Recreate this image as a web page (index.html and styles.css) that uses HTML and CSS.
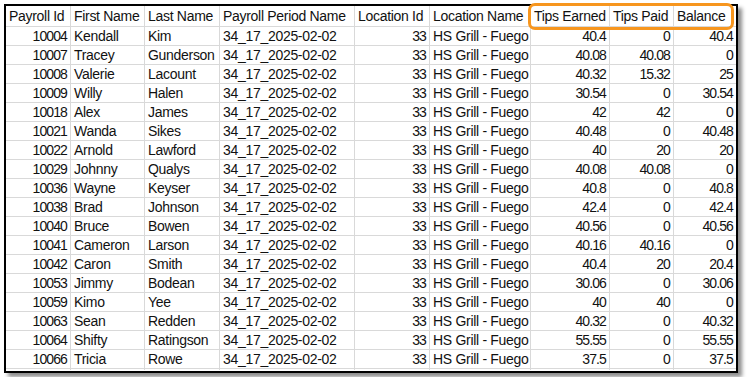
FILE: index.html
```html
<!DOCTYPE html>
<html>
<head>
<meta charset="utf-8">
<link rel="stylesheet" href="styles.css">
</head>
<body>
<div class="page">
  <div class="sheet">
    <table class="grid">
      <colgroup>
        <col class="c1"><col class="c2"><col class="c3"><col class="c4"><col class="c5"><col class="c6"><col class="c7"><col class="c8"><col class="c9">
      </colgroup>
      <thead>
        <tr>
          <th>Payroll Id</th><th>First Name</th><th>Last Name</th><th>Payroll Period Name</th><th>Location Id</th><th>Location Name</th><th>Tips Earned</th><th>Tips Paid</th><th>Balance</th>
        </tr>
      </thead>
      <tbody>
        <tr><td class="n">10004</td><td>Kendall</td><td>Kim</td><td>34_17_2025-02-02</td><td class="n">33</td><td>HS Grill - Fuego</td><td class="n">40.4</td><td class="n">0</td><td class="n">40.4</td></tr>
        <tr><td class="n">10007</td><td>Tracey</td><td>Gunderson</td><td>34_17_2025-02-02</td><td class="n">33</td><td>HS Grill - Fuego</td><td class="n">40.08</td><td class="n">40.08</td><td class="n">0</td></tr>
        <tr><td class="n">10008</td><td>Valerie</td><td>Lacount</td><td>34_17_2025-02-02</td><td class="n">33</td><td>HS Grill - Fuego</td><td class="n">40.32</td><td class="n">15.32</td><td class="n">25</td></tr>
        <tr><td class="n">10009</td><td>Willy</td><td>Halen</td><td>34_17_2025-02-02</td><td class="n">33</td><td>HS Grill - Fuego</td><td class="n">30.54</td><td class="n">0</td><td class="n">30.54</td></tr>
        <tr><td class="n">10018</td><td>Alex</td><td>James</td><td>34_17_2025-02-02</td><td class="n">33</td><td>HS Grill - Fuego</td><td class="n">42</td><td class="n">42</td><td class="n">0</td></tr>
        <tr><td class="n">10021</td><td>Wanda</td><td>Sikes</td><td>34_17_2025-02-02</td><td class="n">33</td><td>HS Grill - Fuego</td><td class="n">40.48</td><td class="n">0</td><td class="n">40.48</td></tr>
        <tr><td class="n">10022</td><td>Arnold</td><td>Lawford</td><td>34_17_2025-02-02</td><td class="n">33</td><td>HS Grill - Fuego</td><td class="n">40</td><td class="n">20</td><td class="n">20</td></tr>
        <tr><td class="n">10029</td><td>Johnny</td><td>Qualys</td><td>34_17_2025-02-02</td><td class="n">33</td><td>HS Grill - Fuego</td><td class="n">40.08</td><td class="n">40.08</td><td class="n">0</td></tr>
        <tr><td class="n">10036</td><td>Wayne</td><td>Keyser</td><td>34_17_2025-02-02</td><td class="n">33</td><td>HS Grill - Fuego</td><td class="n">40.8</td><td class="n">0</td><td class="n">40.8</td></tr>
        <tr><td class="n">10038</td><td>Brad</td><td>Johnson</td><td>34_17_2025-02-02</td><td class="n">33</td><td>HS Grill - Fuego</td><td class="n">42.4</td><td class="n">0</td><td class="n">42.4</td></tr>
        <tr><td class="n">10040</td><td>Bruce</td><td>Bowen</td><td>34_17_2025-02-02</td><td class="n">33</td><td>HS Grill - Fuego</td><td class="n">40.56</td><td class="n">0</td><td class="n">40.56</td></tr>
        <tr><td class="n">10041</td><td>Cameron</td><td>Larson</td><td>34_17_2025-02-02</td><td class="n">33</td><td>HS Grill - Fuego</td><td class="n">40.16</td><td class="n">40.16</td><td class="n">0</td></tr>
        <tr><td class="n">10042</td><td>Caron</td><td>Smith</td><td>34_17_2025-02-02</td><td class="n">33</td><td>HS Grill - Fuego</td><td class="n">40.4</td><td class="n">20</td><td class="n">20.4</td></tr>
        <tr><td class="n">10053</td><td>Jimmy</td><td>Bodean</td><td>34_17_2025-02-02</td><td class="n">33</td><td>HS Grill - Fuego</td><td class="n">30.06</td><td class="n">0</td><td class="n">30.06</td></tr>
        <tr><td class="n">10059</td><td>Kimo</td><td>Yee</td><td>34_17_2025-02-02</td><td class="n">33</td><td>HS Grill - Fuego</td><td class="n">40</td><td class="n">40</td><td class="n">0</td></tr>
        <tr><td class="n">10063</td><td>Sean</td><td>Redden</td><td>34_17_2025-02-02</td><td class="n">33</td><td>HS Grill - Fuego</td><td class="n">40.32</td><td class="n">0</td><td class="n">40.32</td></tr>
        <tr><td class="n">10064</td><td>Shifty</td><td>Ratingson</td><td>34_17_2025-02-02</td><td class="n">33</td><td>HS Grill - Fuego</td><td class="n">55.55</td><td class="n">0</td><td class="n">55.55</td></tr>
        <tr><td class="n">10066</td><td>Tricia</td><td>Rowe</td><td>34_17_2025-02-02</td><td class="n">33</td><td>HS Grill - Fuego</td><td class="n">37.5</td><td class="n">0</td><td class="n">37.5</td></tr>
        <tr><td></td><td></td><td></td><td></td><td></td><td></td><td></td><td></td><td></td></tr>
      </tbody>
    </table>
    <div class="highlight"></div>
  </div>
</div>
</body>
</html>
```

FILE: styles.css
```css
html, body {
  margin: 0;
  padding: 0;
  background: #ffffff;
}

.page {
  padding: 4px;
  width: 734px;
}

.sheet {
  position: relative;
  width: 730px;
  height: 365px;
  border: 2px solid #000;
  box-shadow: 4px 4px 4px rgba(0, 0, 0, 0.45);
  background: #fff;
}

.grid {
  border-collapse: separate;
  border-spacing: 0;
  table-layout: fixed;
  width: 730px;
  font-family: "Liberation Sans", Arial, sans-serif;
  font-size: 14px;
  color: #111;
}

.c1 { width: 65px; }
.c2 { width: 74px; }
.c3 { width: 75px; }
.c4 { width: 135px; }
.c5 { width: 75px; }
.c6 { width: 101px; }
.c7 { width: 79px; }
.c8 { width: 64px; }
.c9 { width: 62px; }

.grid th,
.grid td {
  padding: 0 3px;
  border-right: 1px solid #d9d9d9;
  border-bottom: 1px solid #d9d9d9;
  white-space: nowrap;
  overflow: hidden;
  text-align: left;
  font-weight: normal;
  vertical-align: middle;
  letter-spacing: -0.3px;
}

.grid th {
  height: 20px;
  line-height: 20px;
}

.grid td {
  height: 18px;
  line-height: 18px;
}

.grid th:last-child,
.grid td:last-child {
  border-right: none;
}

.grid td.n {
  text-align: right;
  letter-spacing: -0.9px;
}

.grid tbody tr:last-child td {
  height: 1px;
  line-height: 1px;
  border-bottom: none;
}

.highlight {
  position: absolute;
  left: 522px;
  top: -3px;
  width: 200px;
  height: 21px;
  border: 3px solid #f7961e;
  border-radius: 7px;
  pointer-events: none;
}
```
